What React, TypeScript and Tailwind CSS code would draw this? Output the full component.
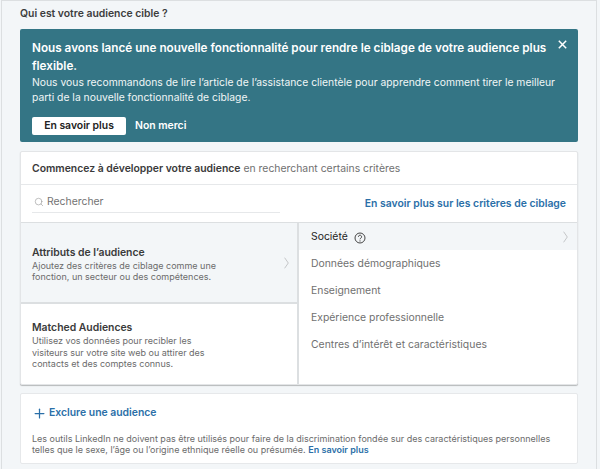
import { Search, Plus } from "lucide-react";

function Help() {
  return (
    <svg width="12" height="12" viewBox="0 0 12 12" fill="none" stroke="#444" strokeWidth="1" className="ml-[6px] mt-[2px]">
      <circle cx="6" cy="6" r="5" />
      <path d="M4.4 4.8a1.6 1.6 0 1 1 2.5 1.3c-.6.4-.9.6-.9 1.2" />
      <circle cx="6" cy="8.9" r=".6" fill="#444" stroke="none" />
    </svg>
  );
}

function Chevron({ className }: { className: string }) {
  return (
    <svg width="5" height="12" viewBox="0 0 5 12" fill="none" stroke="#c4c6c8" strokeWidth="1" className={className}>
      <path d="M.6.7 4.3 6 .6 11.3" />
    </svg>
  );
}

function Close() {
  return (
    <svg width="9" height="9" viewBox="0 0 9 9" fill="none" stroke="#fff" strokeWidth="1.5" className="absolute top-[11px] right-[11px]">
      <path d="M.8.8l7.4 7.4M8.2.8.8 8.2" />
    </svg>
  );
}

export default function App() {
  const items = ["Données démographiques", "Enseignement", "Expérience professionnelle", "Centres d’intérêt et caractéristiques"];
  return (
    <div className="w-[600px] h-[469px] overflow-hidden bg-[#f3f6f8] font-['Inter',sans-serif] text-[#000000]">
      <div className="ml-[1px] w-[596px] h-[469px] bg-[#f3f6f8] border-x border-t border-[#dcdfe1] pl-[18px] pr-[18px]">
        <h2 className="h-[28px] pt-[6px] text-[10.4px] leading-[14px] font-semibold text-[#3d3d3d]">Qui est votre audience cible ?</h2>
        <div className="relative w-[558px] h-[113px] bg-[#347585] rounded-[2px] pt-[10px] pl-[12px] text-white">
          <p className="w-[520px] text-[11.73px] leading-[18px] font-semibold">Nous avons lancé une nouvelle fonctionnalité pour rendre le ciblage de votre audience plus flexible.</p>
          <p className="w-[530px] text-[10.35px] leading-[15px] text-[#f0f5f6]">Nous vous recommandons de lire l’article de l’assistance clientèle pour apprendre comment tirer le meilleur parti de la nouvelle fonctionnalité de ciblage.</p>
          <div className="flex items-center mt-[12px]">
            <button className="w-[94px] h-[18px] bg-white rounded-[2px] text-[10.4px] font-semibold leading-[18px] text-[#222]">En savoir plus</button>
            <span className="ml-[9px] text-[10.4px] font-semibold leading-[18px]">Non merci</span>
          </div>
          <Close />
        </div>
        <div className="mt-[9px] w-[558px] h-[234px] bg-white rounded-[2px] border border-[#e3e5e7] shadow-[0_1px_1px_rgba(0,0,0,0.25)] flex flex-col">
          <div className="h-[33px] flex items-center pl-[11px] pt-[1px] border-b border-[#e6e8ea] text-[10.4px]">
            <span className="font-semibold text-[#3a3a3a]">Commencez à développer votre audience</span>
            <span className="ml-[3px] text-[#707070]">en recherchant certains critères</span>
          </div>
          <div className="h-[38px] flex items-start pl-[11px] pr-[11px] border-b border-[#dcdfe1]">
            <div className="w-[248px] h-[28px] flex items-center border-b border-[#e6e8ea] pl-[2px] pt-[6px]">
              <Search size={10} strokeWidth={1.5} className="text-[#9a9a9a]" />
              <span className="ml-[3px] text-[10.4px] text-[#737373]">Rechercher</span>
            </div>
            <a className="ml-auto mt-[12px] text-[10.4px] leading-[14px] font-semibold text-[#2b6fa8]">En savoir plus sur les critères de ciblage</a>
          </div>
          <div className="flex flex-1 min-h-0">
            <div className="w-[278px] flex flex-col border-r-2 border-[#dcdfe1]">
              <div className="h-[81px] relative bg-[#f3f6f8] border-b-2 border-[#dcdfe1] pl-[11px] pt-[3px] flex flex-col justify-center">
                <div className="text-[10.4px] leading-[14px] font-semibold text-[#3a3a3a]">Attributs de l’audience</div>
                <div className="w-[190px] text-[9px] leading-[11.5px] text-[#6b6b6b]">Ajoutez des critères de ciblage comme une fonction, un secteur ou des compétences.</div>
                <Chevron className="absolute left-[263px] top-[34px]" />
              </div>
              <div className="flex-1 pl-[11px] pt-[17px]">
                <div className="text-[10.4px] leading-[14px] font-semibold text-[#3a3a3a]">Matched Audiences</div>
                <div className="w-[180px] text-[9px] leading-[11.5px] text-[#6b6b6b]">Utilisez vos données pour recibler les visiteurs sur votre site web ou attirer des contacts et des comptes connus.</div>
              </div>
            </div>
            <div className="flex-1">
              <div className="h-[27px] bg-[#f3f6f8] flex items-center pl-[12px] relative text-[10.4px] text-[#222]">
                Société<Help />
                <Chevron className="absolute right-[9px] top-[8px]" />
              </div>
              {items.map((t) => (
                <div key={t} className="h-[27px] flex items-center pl-[12px] text-[10.4px] text-[#707070]">{t}</div>
              ))}
            </div>
          </div>
        </div>
        <div className="mt-[8px] w-[558px] h-[71px] bg-white rounded-[2px] border border-[#e6e8ea] pl-[11px]">
          <div className="flex items-center h-[38px] text-[#2b6fa8]">
            <Plus size={15} strokeWidth={2} />
            <span className="ml-[2px] text-[10.4px] font-semibold">Exclure une audience</span>
          </div>
          <p className="w-[530px] pt-[1px] text-[9px] leading-[11px] text-[#6b6b6b]">Les outils LinkedIn ne doivent pas être utilisés pour faire de la discrimination fondée sur des caractéristiques personnelles telles que le sexe, l’âge ou l’origine ethnique réelle ou présumée. <a className="font-semibold text-[#2b6fa8]">En savoir plus</a></p>
        </div>
      </div>
    </div>
  );
}
